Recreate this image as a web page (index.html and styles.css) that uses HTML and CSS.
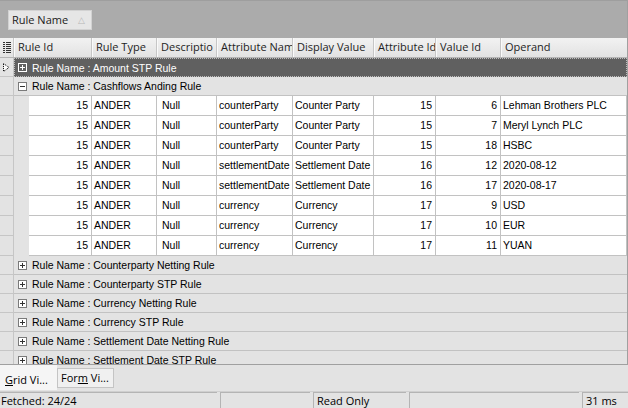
FILE: index.html
```html
<!DOCTYPE html>
<html>
<head>
<meta charset="utf-8">
<link rel="stylesheet" href="styles.css">
</head>
<body>
<div class="grid">
  <div class="group-panel">
    <div class="chip">Rule Name <span class="sort">&#9651;</span></div>
  </div>
  <div class="hrow">
    <div class="ind hind"><svg width="8" height="11" viewBox="0 0 8 11"><g fill="#333"><rect x="0" y="0" width="2" height="1"/><rect x="3" y="0" width="5" height="1"/><rect x="0" y="2" width="2" height="1"/><rect x="3" y="2" width="5" height="1"/><rect x="0" y="4" width="2" height="1"/><rect x="3" y="4" width="5" height="1"/><rect x="0" y="6" width="2" height="1"/><rect x="3" y="6" width="5" height="1"/><rect x="0" y="8" width="2" height="1"/><rect x="3" y="8" width="5" height="1"/><rect x="0" y="10" width="2" height="1"/><rect x="3" y="10" width="5" height="1"/></g></svg></div>
    <div class="hc h1">Rule Id</div>
    <div class="hc c2">Rule Type</div>
    <div class="hc c3">Descriptio</div>
    <div class="hc c4">Attribute Nam</div>
    <div class="hc c5">Display Value</div>
    <div class="hc c6">Attribute Id</div>
    <div class="hc c7">Value Id</div>
    <div class="hc c8">Operand</div>
  </div>
  <div class="body">
    <div class="grow">
      <div class="ind"><svg width="7" height="9" viewBox="0 0 7 9"><polygon points="0.5,0.5 6,4.5 0.5,8.5" fill="#fff" stroke="#000" stroke-width="1" stroke-dasharray="1 1"/></svg></div>
      <div class="gcell focus"><span class="exp dark"><svg width="9" height="9" viewBox="0 0 9 9"><rect x="0.5" y="0.5" width="8" height="8" fill="#606060" stroke="#fff"/><path d="M2 4.5H7M4.5 2V7" stroke="#fff"/></svg></span>Rule Name : Amount STP Rule</div>
    </div>
    <div class="grow">
      <div class="ind"></div>
      <div class="gcell"><span class="exp"><svg width="9" height="9" viewBox="0 0 9 9"><rect x="0.5" y="0.5" width="8" height="8" fill="#fff" stroke="#7a7a7a"/><path d="M2 4.5H7" stroke="#333"/></svg></span>Rule Name : Cashflows Anding Rule</div>
    </div>

    <div class="drow"><div class="ind"></div><div class="indent"></div><div class="dc c1 r">15</div><div class="dc c2">ANDER</div><div class="dc c3">Null</div><div class="dc c4">counterParty</div><div class="dc c5">Counter Party</div><div class="dc c6 r">15</div><div class="dc c7 r">6</div><div class="dc c8">Lehman Brothers PLC</div></div>
    <div class="drow"><div class="ind"></div><div class="indent"></div><div class="dc c1 r">15</div><div class="dc c2">ANDER</div><div class="dc c3">Null</div><div class="dc c4">counterParty</div><div class="dc c5">Counter Party</div><div class="dc c6 r">15</div><div class="dc c7 r">7</div><div class="dc c8">Meryl Lynch PLC</div></div>
    <div class="drow"><div class="ind"></div><div class="indent"></div><div class="dc c1 r">15</div><div class="dc c2">ANDER</div><div class="dc c3">Null</div><div class="dc c4">counterParty</div><div class="dc c5">Counter Party</div><div class="dc c6 r">15</div><div class="dc c7 r">18</div><div class="dc c8">HSBC</div></div>
    <div class="drow"><div class="ind"></div><div class="indent"></div><div class="dc c1 r">15</div><div class="dc c2">ANDER</div><div class="dc c3">Null</div><div class="dc c4">settlementDate</div><div class="dc c5">Settlement Date</div><div class="dc c6 r">16</div><div class="dc c7 r">12</div><div class="dc c8">2020-08-12</div></div>
    <div class="drow"><div class="ind"></div><div class="indent"></div><div class="dc c1 r">15</div><div class="dc c2">ANDER</div><div class="dc c3">Null</div><div class="dc c4">settlementDate</div><div class="dc c5">Settlement Date</div><div class="dc c6 r">16</div><div class="dc c7 r">17</div><div class="dc c8">2020-08-17</div></div>
    <div class="drow"><div class="ind"></div><div class="indent"></div><div class="dc c1 r">15</div><div class="dc c2">ANDER</div><div class="dc c3">Null</div><div class="dc c4">currency</div><div class="dc c5">Currency</div><div class="dc c6 r">17</div><div class="dc c7 r">9</div><div class="dc c8">USD</div></div>
    <div class="drow"><div class="ind"></div><div class="indent"></div><div class="dc c1 r">15</div><div class="dc c2">ANDER</div><div class="dc c3">Null</div><div class="dc c4">currency</div><div class="dc c5">Currency</div><div class="dc c6 r">17</div><div class="dc c7 r">10</div><div class="dc c8">EUR</div></div>
    <div class="drow"><div class="ind"></div><div class="indent"></div><div class="dc c1 r">15</div><div class="dc c2">ANDER</div><div class="dc c3">Null</div><div class="dc c4">currency</div><div class="dc c5">Currency</div><div class="dc c6 r">17</div><div class="dc c7 r">11</div><div class="dc c8">YUAN</div></div>

    <div class="grow"><div class="ind"></div><div class="gcell"><span class="exp"><svg width="9" height="9" viewBox="0 0 9 9"><rect x="0.5" y="0.5" width="8" height="8" fill="#fff" stroke="#7a7a7a"/><path d="M2 4.5H7M4.5 2V7" stroke="#333"/></svg></span>Rule Name : Counterparty Netting Rule</div></div>
    <div class="grow"><div class="ind"></div><div class="gcell"><span class="exp"><svg width="9" height="9" viewBox="0 0 9 9"><rect x="0.5" y="0.5" width="8" height="8" fill="#fff" stroke="#7a7a7a"/><path d="M2 4.5H7M4.5 2V7" stroke="#333"/></svg></span>Rule Name : Counterparty STP Rule</div></div>
    <div class="grow"><div class="ind"></div><div class="gcell"><span class="exp"><svg width="9" height="9" viewBox="0 0 9 9"><rect x="0.5" y="0.5" width="8" height="8" fill="#fff" stroke="#7a7a7a"/><path d="M2 4.5H7M4.5 2V7" stroke="#333"/></svg></span>Rule Name : Currency Netting Rule</div></div>
    <div class="grow"><div class="ind"></div><div class="gcell"><span class="exp"><svg width="9" height="9" viewBox="0 0 9 9"><rect x="0.5" y="0.5" width="8" height="8" fill="#fff" stroke="#7a7a7a"/><path d="M2 4.5H7M4.5 2V7" stroke="#333"/></svg></span>Rule Name : Currency STP Rule</div></div>
    <div class="grow"><div class="ind"></div><div class="gcell"><span class="exp"><svg width="9" height="9" viewBox="0 0 9 9"><rect x="0.5" y="0.5" width="8" height="8" fill="#fff" stroke="#7a7a7a"/><path d="M2 4.5H7M4.5 2V7" stroke="#333"/></svg></span>Rule Name : Settlement Date Netting Rule</div></div>
    <div class="grow"><div class="ind"></div><div class="gcell"><span class="exp"><svg width="9" height="9" viewBox="0 0 9 9"><rect x="0.5" y="0.5" width="8" height="8" fill="#fff" stroke="#7a7a7a"/><path d="M2 4.5H7M4.5 2V7" stroke="#333"/></svg></span>Rule Name : Settlement Date STP Rule</div></div>
  </div>
</div>
<div class="tabs">
  <div class="tab active"><u>G</u>rid Vi...</div>
  <div class="tab">For<u>m</u> Vi...</div>
</div>
<div class="status">
  <div class="panel p1">Fetched: 24/24</div>
  <div class="panel p2"></div>
  <div class="panel p3">Read Only</div>
  <div class="panel p4"></div>
  <div class="panel p5">31 ms</div>
</div>
</body>
</html>
```
FILE: styles.css
```css
* { box-sizing: border-box; }
html, body { margin: 0; padding: 0; }
body {
  width: 628px;
  height: 408px;
  overflow: hidden;
  background: #e3e3e3;
  font-family: "Liberation Sans", Arial, sans-serif;
  font-size: 10.5px;
  color: #000;
  display: flex;
  flex-direction: column;
}
.grid {
  height: 365px;
  width: 628px;
  border-right: 1px solid #a0a0a0;
  border-bottom: 1px solid #a0a0a0;
  overflow: hidden;
  display: flex;
  flex-direction: column;
  flex: none;
  background: #e3e3e3;
}
.group-panel {
  height: 38px;
  flex: none;
  background: #ababab;
  border-top: 1px solid #9e9e9e;
  padding: 9px 0 0 8px;
}
.chip {
  width: 84px;
  height: 20px;
  background: #e6e6e6;
  border: 1px solid #d2d2d2;
  font-family: "Open Sans", sans-serif;
  font-size: 11px;
  color: #1a1a1a;
  line-height: 18px;
  padding-left: 3px;
  display: flex;
  justify-content: space-between;
  padding-right: 6px;
}
.sort { color: #b8b8b8; font-size: 9px; }
.hrow {
  height: 20px;
  flex: none;
  display: flex;
  border-bottom: 1px solid #b4b4b4;
  background: linear-gradient(#f2f2f2, #e2e2e2);
}
.hc {
  height: 19px;
  border-right: 1px solid #c6c6c6;
  border-left: 1px solid #fafafa;
  font-family: "Open Sans", sans-serif;
  font-size: 11px;
  color: #1e1e1e;
  line-height: 18px;
  padding-left: 3px;
  white-space: nowrap;
  overflow: hidden;
}
.h1 { width: 78px; }
.ind {
  width: 14px;
  flex: none;
  border-right: 1px solid #c6c6c6;
  border-bottom: 1px solid #c6c6c6;
  background: #e3e3e3;
  display: flex;
  align-items: center;
  padding-left: 3px;
}
.hind { height: 19px; border-bottom: none; background: transparent; }
.c1 { width: 63px; }
.c2 { width: 65px; }
.c3 { width: 60px; }
.c4 { width: 76px; }
.c5 { width: 81px; }
.c6 { width: 62px; }
.c7 { width: 65px; }
.c8 { width: 126px; }
.hc.c8 { border-right: none; }
.body { display: flex; flex-direction: column; }
.grow {
  height: 19px;
  display: flex;
  flex: none;
}
.gcell {
  width: 613px;
  border-bottom: 1px solid #c2c2c2;
  display: flex;
  align-items: center;
  padding-left: 4px;
  line-height: 18px;
  white-space: nowrap;
  background: #e3e3e3;
}
.gcell.focus {
  background: #606060;
  color: #fff;
  border: 1px dotted #bdbdbd;
  padding-left: 3px;
}
.exp { width: 9px; height: 9px; display: flex; margin-right: 5px; }
.drow {
  height: 20px;
  display: flex;
  flex: none;
}
.indent { width: 15px; flex: none; background: #e3e3e3; }
.dc {
  height: 20px;
  background: #fff;
  border-right: 1px solid #c2c2c2;
  border-bottom: 1px solid #c2c2c2;
  padding: 0 2px;
  line-height: 19px;
  white-space: nowrap;
  overflow: hidden;
  flex: none;
}
.dc.c3 { padding-left: 5px; }
.dc.r { text-align: right; padding-right: 3px; }
.tabs {
  height: 26px;
  flex: none;
  display: flex;
  align-items: flex-start;
  font-family: "Open Sans", sans-serif;
  font-size: 11px;
  color: #000;
}
.tab {
  height: 20px;
  margin-top: 3px;
  width: 57px;
  border: 1px solid #c4c4c4;
  background: #f0f0f0;
  line-height: 18px;
  padding-left: 3px;
  white-space: nowrap;
}
.tab.active {
  height: 25px;
  margin-top: 0;
  border: none;
  background: #f5f5f5;
  padding-left: 5px;
  line-height: 30px;
  width: 57px;
}
.status {
  flex: 1;
  display: flex;
  gap: 3px;
  border-top: 1px solid #cfcfcf;
  font-family: "Open Sans", sans-serif;
  font-size: 11px;
  color: #000;
}
.panel {
  border-left: 1px solid #b4b4b4;
  border-top: 1px solid #b4b4b4;
  line-height: 16px;
  padding-left: 3px;
  white-space: nowrap;
}
.p1 { width: 217px; border-left: none; padding-left: 1px; }
.p2 { width: 90px; }
.p3 { width: 93px; }
.p4 { width: 170px; }
.p5 { flex: 1; }
```
